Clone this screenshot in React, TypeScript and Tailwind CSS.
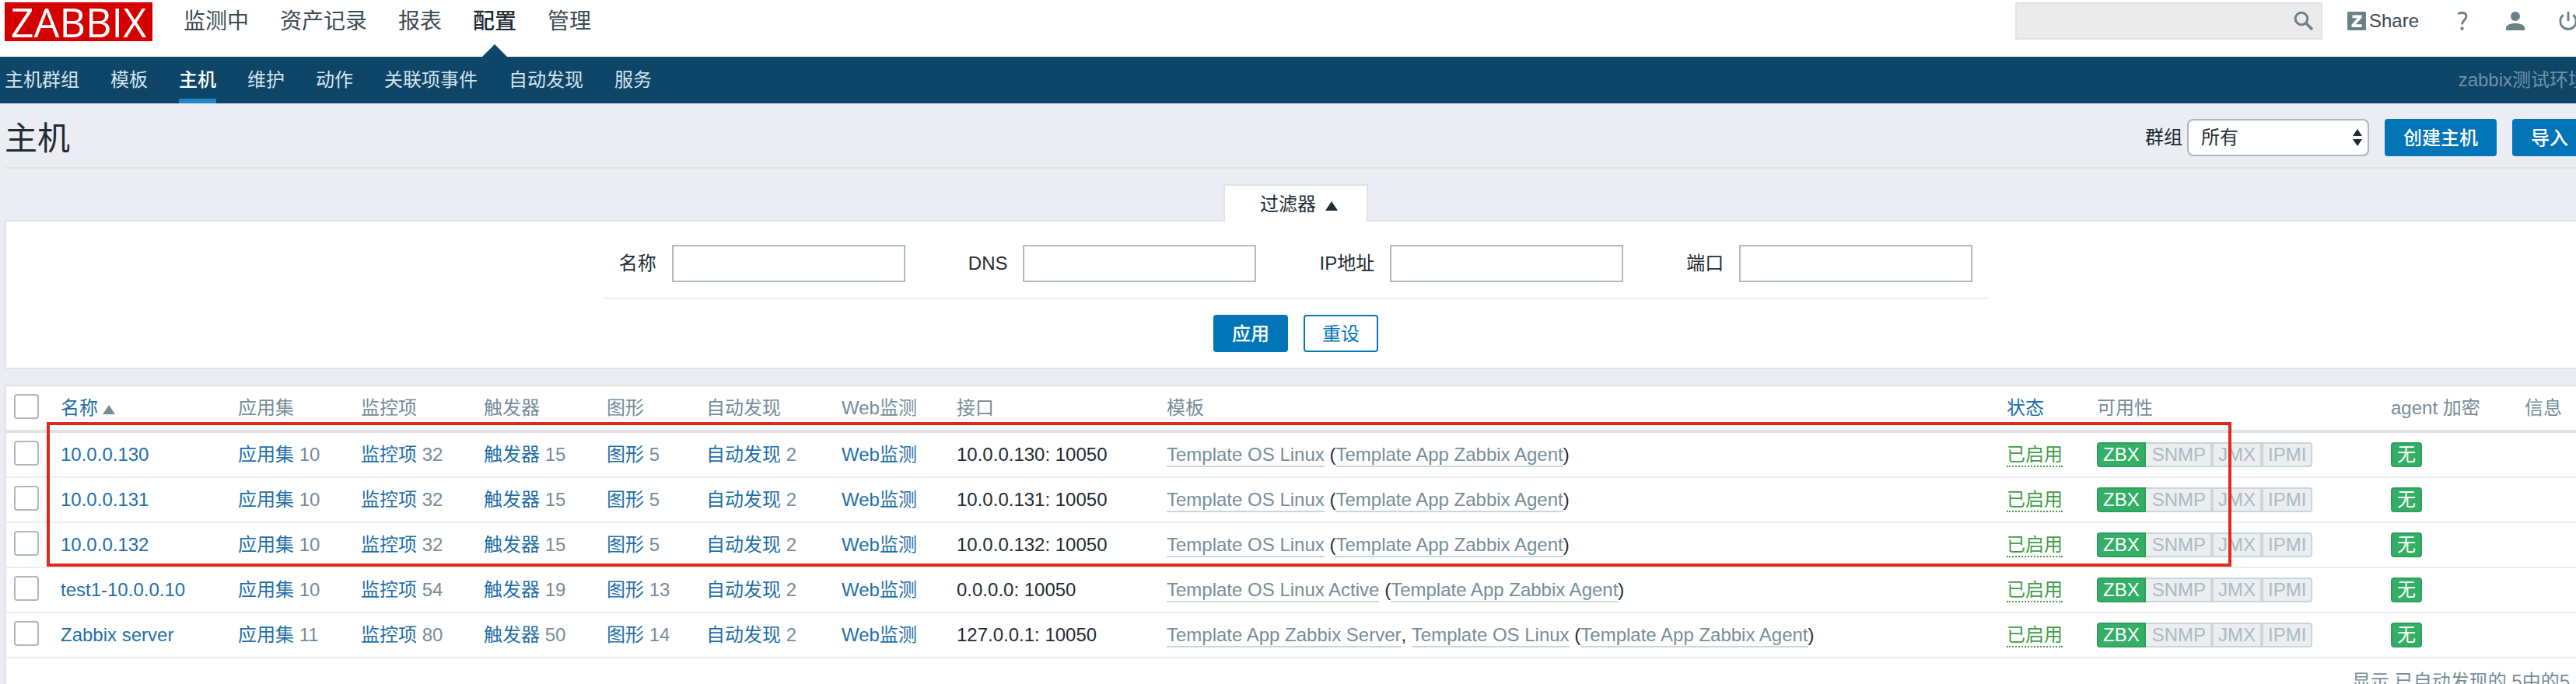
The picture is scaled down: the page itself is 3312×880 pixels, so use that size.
import React from "react";

const mainMenu = ["监测中", "资产记录", "报表", "配置", "管理"];
const subMenu = ["主机群组", "模板", "主机", "维护", "动作", "关联项事件", "自动发现", "服务"];
const filterFields = ["名称", "DNS", "IP地址", "端口"];

type Template = { name: string; linked?: string };
type Host = {
  name: string;
  apps: number;
  items: number;
  triggers: number;
  graphs: number;
  discovery: number;
  iface: string;
  templates: Template[];
};

const agent = "Template App Zabbix Agent";
const hosts: Host[] = [
  { name: "10.0.0.130", apps: 10, items: 32, triggers: 15, graphs: 5, discovery: 2, iface: "10.0.0.130: 10050", templates: [{ name: "Template OS Linux", linked: agent }] },
  { name: "10.0.0.131", apps: 10, items: 32, triggers: 15, graphs: 5, discovery: 2, iface: "10.0.0.131: 10050", templates: [{ name: "Template OS Linux", linked: agent }] },
  { name: "10.0.0.132", apps: 10, items: 32, triggers: 15, graphs: 5, discovery: 2, iface: "10.0.0.132: 10050", templates: [{ name: "Template OS Linux", linked: agent }] },
  { name: "test1-10.0.0.10", apps: 10, items: 54, triggers: 19, graphs: 13, discovery: 2, iface: "0.0.0.0: 10050", templates: [{ name: "Template OS Linux Active", linked: agent }] },
  { name: "Zabbix server", apps: 11, items: 80, triggers: 50, graphs: 14, discovery: 2, iface: "127.0.0.1: 10050", templates: [{ name: "Template App Zabbix Server" }, { name: "Template OS Linux", linked: agent }] },
];

function Header() {
  return (
    <header className="flex h-[73px] items-start justify-between bg-white px-[6px] pt-[3px]">
      <div className="flex items-start">
        <a href="#" className="flex h-[50px] w-[190px] items-center justify-center bg-[#d40000] font-['Open_Sans',sans-serif] text-[52px] leading-[50px] text-white">
          ZABBIX
        </a>
        <nav className="ml-10 flex gap-10 text-[28px]">
          {mainMenu.map((m) => (
            <a
              key={m}
              href="#"
              className={
                m === "配置"
                  ? "relative h-[70px] leading-[50px] font-medium text-[#1f2c33]"
                  : "h-[70px] leading-[50px] text-[#3c4a52]"
              }
            >
              {m}
              {m === "配置" && (
                <svg className="absolute bottom-0 left-1/2 -ml-4" width="32" height="16" viewBox="0 0 32 16" aria-hidden="true">
                  <path d="M0 16 16 0l16 16z" fill="#0e4669" />
                </svg>
              )}
            </a>
          ))}
        </nav>
      </div>
      <div className="flex h-12 items-center pr-3">
        <div className="mr-8 flex h-12 w-[395px] items-center border-2 border-[#dfe4e7] bg-[#ebebeb] pr-[9px]">
          <input aria-label="搜索" className="h-full min-w-0 flex-1 bg-transparent px-2 outline-none" />
          <button aria-label="搜索">
            <svg width="26" height="26" viewBox="0 0 26 26" fill="none" stroke="#6c8087" aria-hidden="true">
              <circle cx="10" cy="10" r="7.8" strokeWidth="3" />
              <path d="m15.500 15.500 8.500 8.500" strokeWidth="3.600" />
            </svg>
          </button>
        </div>
        <div className="flex items-center gap-11">
          <a href="#" className="flex items-center gap-1 text-[#3c4a52]">
            <svg width="24" height="24" viewBox="0 0 24 24" aria-hidden="true">
              <rect width="24" height="24" rx="1.500" fill="#6c8087" />
              <path d="M6.500 4.500h12v3.200l-7.600 8.600h7.600v3.700H5.500v-3.200l7.600-8.600H6.500z" fill="#fff" />
            </svg>
            Share
          </a>
          <a href="#" aria-label="帮助" className="flex">
            <svg width="24" height="24" viewBox="0 0 24 24" fill="none" stroke="#6c8087" aria-hidden="true">
              <path d="M6.200 2.800C8 2 9.800 1.500 11.500 1.500c3.600 0 5.500 1.700 5.500 4.500 0 4.500-5.500 5-5.500 10.500" strokeWidth="2.800" />
              <circle cx="11.500" cy="21.700" r="2.200" fill="#6c8087" stroke="none" />
            </svg>
          </a>
          <a href="#" aria-label="用户" className="flex">
            <svg width="24" height="24" viewBox="0 0 24 24" fill="#6c8087" aria-hidden="true">
              <circle cx="12" cy="6" r="6" />
              <path d="M0 24v-3c0-4 6-6 12-6s12 2 12 6v3z" />
            </svg>
          </a>
          <a href="#" aria-label="退出" className="flex">
            <svg width="24" height="24" viewBox="0 0 24 24" fill="none" stroke="#6c8087" strokeWidth="2.800" aria-hidden="true">
              <path d="M12 0v12M5.800 4.200a10.200 10.200 0 1 0 12.400 0" />
            </svg>
          </a>
        </div>
      </div>
    </header>
  );
}

function SubNav() {
  return (
    <div className="flex h-[60px] items-center justify-between bg-[#0e4669] px-[6px]">
      <nav className="flex gap-10">
        {subMenu.map((m) => (
          <a
            key={m}
            href="#"
            className={
              m === "主机"
                ? "h-[60px] border-b-6 border-[#1f87c8] leading-[60px] font-medium text-white"
                : "h-[60px] leading-[60px] text-[#d5e3ec]"
            }
          >
            {m}
          </a>
        ))}
      </nav>
      <div className="text-[#6f91a7]">zabbix测试环境</div>
    </div>
  );
}

function Filter() {
  return (
    <section>
      <div className="flex justify-center">
        <button className="relative z-10 -mb-[2px] flex h-12 w-[186px] items-center justify-center gap-3 border-2 border-b-0 border-[#dfe4e7] bg-white pt-[2px] pl-2">
          过滤器
          <svg className="mt-1" width="16" height="12" viewBox="0 0 16 12" aria-hidden="true">
            <path d="M0 12 8 0l8 12z" fill="#1f2c33" />
          </svg>
        </button>
      </div>
      <form className="flex flex-col items-center border-2 border-[#dfe4e7] bg-white pt-[30px] pb-5">
        <div className="flex gap-[81px] border-b-2 border-[#ebeef0] px-5 pb-5">
          {filterFields.map((f) => (
            <label key={f} className="flex items-center gap-5">
              {f}
              <input className="h-12 w-[300px] border-2 border-[#acbbc2] bg-white px-2 outline-none" />
            </label>
          ))}
        </div>
        <div className="flex gap-5 pt-5">
          <button type="button" className="h-12 w-24 rounded-sm bg-[#0275b8] pt-[2px] font-medium text-white">应用</button>
          <button type="button" className="h-12 w-24 rounded-sm border-2 border-[#0275b8] bg-white pt-[2px] text-[#0275b8]">重设</button>
        </div>
      </form>
    </section>
  );
}

function Tick({ label }: { label: string }) {
  return (
    <input
      type="checkbox"
      aria-label={label}
      className="-mt-1 block size-8 appearance-none rounded-sm border-2 border-[#b0b8bc] bg-white"
    />
  );
}

function Counted({ label, count }: { label: string; count: number }) {
  return (
    <td className="text-[#768d99]">
      <a href="#" className="text-[#1f6fa9]">{label}</a> {count}
    </td>
  );
}

function TemplateLink({ name }: { name: string }) {
  return (
    <a href="#" className="inline-block h-8 border-b-2 border-[#ccd5d9] leading-8 text-[#768d99]">{name}</a>
  );
}

function HostRow({ host }: { host: Host }) {
  return (
    <tr className="h-[58px] [&>td]:border-b-2 [&>td]:border-[#ebeef0] [&>td]:px-[10px]">
      <td><Tick label={host.name} /></td>
      <td><a href="#" className="text-[#1f6fa9]">{host.name}</a></td>
      <Counted label="应用集" count={host.apps} />
      <Counted label="监控项" count={host.items} />
      <Counted label="触发器" count={host.triggers} />
      <Counted label="图形" count={host.graphs} />
      <Counted label="自动发现" count={host.discovery} />
      <td><a href="#" className="text-[#1f6fa9]">Web监测</a></td>
      <td>{host.iface}</td>
      <td>
        {host.templates.map((t, i) => (
          <React.Fragment key={t.name}>
            {i > 0 && ", "}
            <TemplateLink name={t.name} />
            {t.linked && <> (<TemplateLink name={t.linked} />)</>}
          </React.Fragment>
        ))}
      </td>
      <td>
        <a href="#" className="inline-block h-8 border-b-2 border-dotted border-[#429e47] leading-8 text-[#429e47]">已启用</a>
      </td>
      <td>
        <div className="flex h-8 leading-7 text-[#acbbc2]">
          <span className="rounded-l-sm border-2 border-[#2f9f5e] bg-[#34af67] px-[6px] text-white">ZBX</span>
          <span className="border-y-2 border-r-4 border-[#ccd5d9] bg-[#ebedef] pr-[6px] pl-2">SNMP</span>
          <span className="border-y-2 border-r-4 border-[#ccd5d9] bg-[#ebedef] px-[6px]">JMX</span>
          <span className="rounded-r-sm border-2 border-l-0 border-[#ccd5d9] bg-[#ebedef] px-[6px]">IPMI</span>
        </div>
      </td>
      <td>
        <span className="flex h-8 w-10 items-center justify-center rounded-sm border-2 border-[#2f9f5e] bg-[#34af67] text-white">无</span>
      </td>
      <td />
    </tr>
  );
}

function HostTable() {
  return (
    <section className="relative border-2 border-[#dfe4e7] bg-white">
      <table className="w-full table-fixed border-separate border-spacing-0 text-left whitespace-nowrap">
        <colgroup>
          <col className="w-[60px]" />
          <col className="w-[228px]" />
          <col className="w-[158px]" />
          <col className="w-[158px]" />
          <col className="w-[158px]" />
          <col className="w-[128px]" />
          <col className="w-[174px]" />
          <col className="w-[148px]" />
          <col className="w-[270px]" />
          <col />
          <col className="w-[116px]" />
          <col className="w-[378px]" />
          <col className="w-[172px]" />
          <col className="w-[88px]" />
        </colgroup>
        <thead>
          <tr className="h-[60px] text-[#768d99] [&>th]:border-b-4 [&>th]:border-[#dfe4e7] [&>th]:px-[10px] [&>th]:font-normal">
            <th><Tick label="全选" /></th>
            <th>
              <a href="#" className="flex items-center gap-[6px] text-[#1f6fa9]">
                名称
                <svg className="mt-1" width="16" height="12" viewBox="0 0 16 12" aria-hidden="true">
                  <path d="M0 12 8 0l8 12z" fill="#768d99" />
                </svg>
              </a>
            </th>
            <th>应用集</th>
            <th>监控项</th>
            <th>触发器</th>
            <th>图形</th>
            <th>自动发现</th>
            <th>Web监测</th>
            <th>接口</th>
            <th>模板</th>
            <th><a href="#" className="text-[#1f6fa9]">状态</a></th>
            <th>可用性</th>
            <th>agent 加密</th>
            <th>信息</th>
          </tr>
        </thead>
        <tbody>
          {hosts.map((h) => <HostRow key={h.name} host={h} />)}
        </tbody>
      </table>
      <p className="py-[14px] pr-[20px] text-right text-[#768d99]">显示 已自动发现的 5中的5</p>
      <div className="pointer-events-none absolute top-[46px] right-[455px] left-[52px] h-[186px] border-4 border-[#dc2b1c]" />
    </section>
  );
}

export default function App() {
  return (
    <div className="h-screen overflow-hidden bg-[#ebedf2] font-['Liberation_Sans','Noto_Sans_CJK_SC',sans-serif] text-[24px] leading-8 text-[#1f2c33]">
      <div className="-mr-5 whitespace-nowrap">
        <Header />
        <SubNav />
        <main className="px-[6px]">
          <div className="mb-5 flex h-[84px] items-center justify-between border-b-2 border-[#dfe4e7] pt-[6px]">
            <h1 className="pt-1 text-[42px] leading-[60px]">主机</h1>
            <div className="flex items-center gap-5">
              <div className="flex items-center gap-[6px]">
                <label htmlFor="group">群组</label>
                <div className="relative">
                  <select id="group" className="block h-12 w-[234px] appearance-none rounded-lg border-2 border-[#b0b5ba] bg-white pl-4">
                    <option>所有</option>
                  </select>
                  <svg className="pointer-events-none absolute top-[13px] right-[9px]" width="12" height="22" viewBox="0 0 12 22" aria-hidden="true">
                    <path d="M0 9 6 0l6 9zM0 13l6 9 6-9z" fill="#1f2c33" />
                  </svg>
                </div>
              </div>
              <button className="h-12 w-36 rounded-sm bg-[#0275b8] pt-[2px] font-medium text-white">创建主机</button>
              <button className="h-12 w-24 rounded-sm bg-[#0275b8] pt-[2px] font-medium text-white">导入</button>
            </div>
          </div>
          <Filter />
          <div className="mt-5">
            <HostTable />
          </div>
        </main>
      </div>
    </div>
  );
}
